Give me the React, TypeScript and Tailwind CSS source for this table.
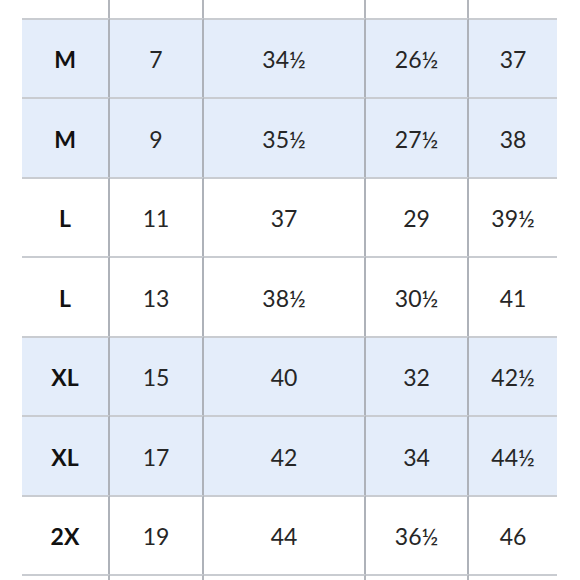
import React from "react";

const rows: { s: string; c: string[]; blue: boolean; h: string }[] = [
  { s: "M", c: ["7", "34½", "26½", "37"], blue: true, h: "h-[79px]" },
  { s: "M", c: ["9", "35½", "27½", "38"], blue: true, h: "h-[80px]" },
  { s: "L", c: ["11", "37", "29", "39½"], blue: false, h: "h-[79px]" },
  { s: "L", c: ["13", "38½", "30½", "41"], blue: false, h: "h-[80px]" },
  { s: "XL", c: ["15", "40", "32", "42½"], blue: true, h: "h-[79px]" },
  { s: "XL", c: ["17", "42", "34", "44½"], blue: true, h: "h-[80px]" },
  { s: "2X", c: ["19", "44", "36½", "46"], blue: false, h: "h-[79px]" },
];

const widths = ["w-[88px]", "w-[94px]", "w-[162px]", "w-[103px]", "w-[88px]"];

function Spacer({ h, top }: { h: string; top: boolean }) {
  return (
    <div className={`flex ${h}`}>
      <div className="w-[22px]" />
      {widths.map((w, i) => (
        <div
          key={i}
          className={`${w} ${top ? "border-t-2 border-t-[#c9ccd1]" : ""} ${
            i < 4 ? "border-r-2 border-r-[#b3b6bc]" : ""
          }`}
        />
      ))}
    </div>
  );
}

export default function App() {
  return (
    <div
      className="w-[580px] h-[580px] bg-white overflow-hidden flex flex-col text-[#262626]"
      style={{ fontFamily: "Lato, 'Open Sans', sans-serif" }}
    >
      <Spacer h="h-[18px]" top={false} />
      {rows.map((r, ri) => (
        <div key={ri} className={`flex ${r.h}`}>
          <div className="w-[22px]" />
          {[r.s, ...r.c].map((t, i) => (
            <div
              key={i}
              className={`${widths[i]} flex items-center justify-center border-t-2 border-t-[#c9ccd1] ${
                i < 4 ? "border-r-2 border-r-[#aeb2b9]" : ""
              } ${r.blue ? "bg-[#e4edfa]" : "bg-white"} ${
                i === 0 ? "font-bold text-[#111]" : "font-normal"
              } text-[23px] leading-none pt-[2px]`}
            >
              {t}
            </div>
          ))}
        </div>
      ))}
      <Spacer h="h-[6px]" top={true} />
    </div>
  );
}
